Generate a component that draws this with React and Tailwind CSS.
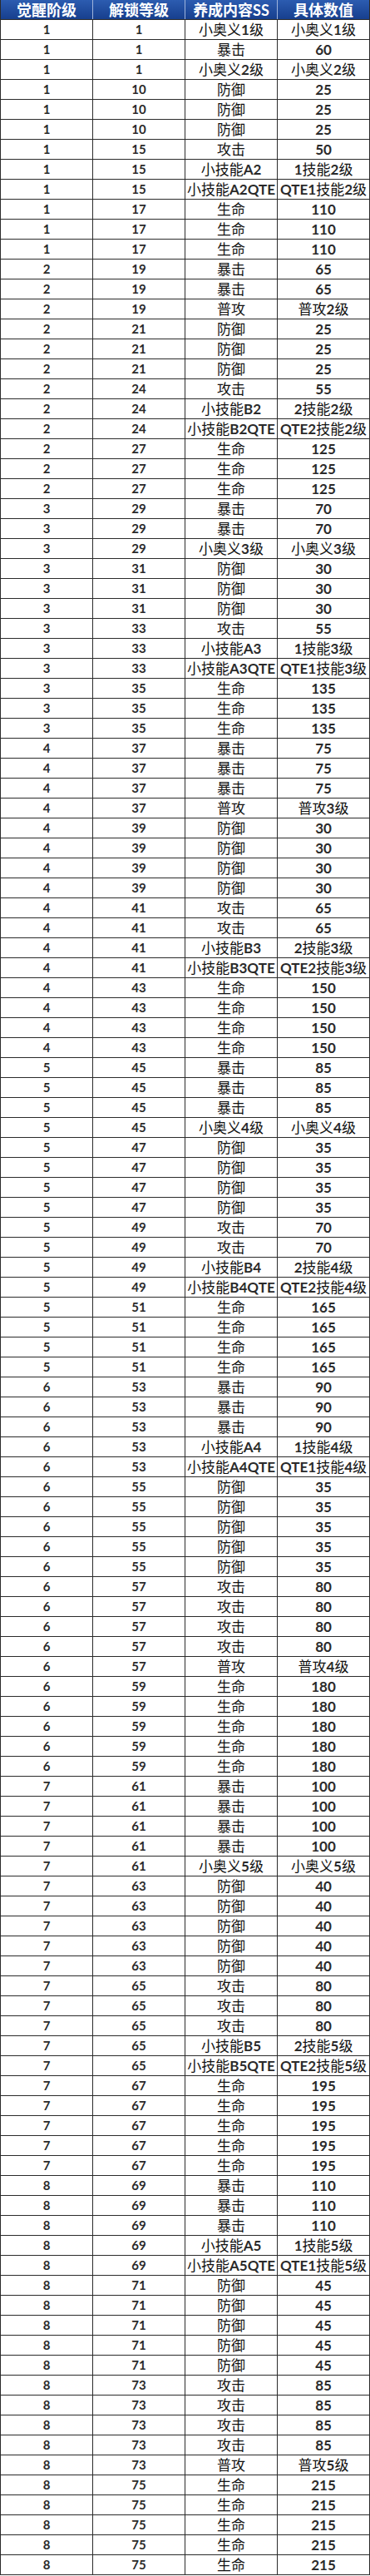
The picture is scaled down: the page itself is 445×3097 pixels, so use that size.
import React from "react";

// [觉醒阶级, 解锁等级, 养成内容, 具体数值, 重复行数]
const groups = [
  [1, 1, "小奥义1级", "小奥义1级", 1],
  [1, 1, "暴击", "60", 1],
  [1, 1, "小奥义2级", "小奥义2级", 1],
  [1, 10, "防御", "25", 3],
  [1, 15, "攻击", "50", 1],
  [1, 15, "小技能A2", "1技能2级", 1],
  [1, 15, "小技能A2QTE", "QTE1技能2级", 1],
  [1, 17, "生命", "110", 3],
  [2, 19, "暴击", "65", 2],
  [2, 19, "普攻", "普攻2级", 1],
  [2, 21, "防御", "25", 3],
  [2, 24, "攻击", "55", 1],
  [2, 24, "小技能B2", "2技能2级", 1],
  [2, 24, "小技能B2QTE", "QTE2技能2级", 1],
  [2, 27, "生命", "125", 3],
  [3, 29, "暴击", "70", 2],
  [3, 29, "小奥义3级", "小奥义3级", 1],
  [3, 31, "防御", "30", 3],
  [3, 33, "攻击", "55", 1],
  [3, 33, "小技能A3", "1技能3级", 1],
  [3, 33, "小技能A3QTE", "QTE1技能3级", 1],
  [3, 35, "生命", "135", 3],
  [4, 37, "暴击", "75", 3],
  [4, 37, "普攻", "普攻3级", 1],
  [4, 39, "防御", "30", 4],
  [4, 41, "攻击", "65", 2],
  [4, 41, "小技能B3", "2技能3级", 1],
  [4, 41, "小技能B3QTE", "QTE2技能3级", 1],
  [4, 43, "生命", "150", 4],
  [5, 45, "暴击", "85", 3],
  [5, 45, "小奥义4级", "小奥义4级", 1],
  [5, 47, "防御", "35", 4],
  [5, 49, "攻击", "70", 2],
  [5, 49, "小技能B4", "2技能4级", 1],
  [5, 49, "小技能B4QTE", "QTE2技能4级", 1],
  [5, 51, "生命", "165", 4],
  [6, 53, "暴击", "90", 3],
  [6, 53, "小技能A4", "1技能4级", 1],
  [6, 53, "小技能A4QTE", "QTE1技能4级", 1],
  [6, 55, "防御", "35", 5],
  [6, 57, "攻击", "80", 4],
  [6, 57, "普攻", "普攻4级", 1],
  [6, 59, "生命", "180", 5],
  [7, 61, "暴击", "100", 4],
  [7, 61, "小奥义5级", "小奥义5级", 1],
  [7, 63, "防御", "40", 5],
  [7, 65, "攻击", "80", 3],
  [7, 65, "小技能B5", "2技能5级", 1],
  [7, 65, "小技能B5QTE", "QTE2技能5级", 1],
  [7, 67, "生命", "195", 5],
  [8, 69, "暴击", "110", 3],
  [8, 69, "小技能A5", "1技能5级", 1],
  [8, 69, "小技能A5QTE", "QTE1技能5级", 1],
  [8, 71, "防御", "45", 5],
  [8, 73, "攻击", "85", 4],
  [8, 73, "普攻", "普攻5级", 1],
  [8, 75, "生命", "215", 5],
];

const rows = groups.flatMap(([stage, level, item, value, count]) =>
  Array.from({ length: count }, () => ({ stage, level, item, value }))
);

// latin letters and digits are bold in the sheet, the hanzi are not
const Mixed = ({ text }) =>
  String(text)
    .split(/([A-Za-z0-9]+)/)
    .filter(Boolean)
    .map((part, i) =>
      /[A-Za-z0-9]/.test(part) ? (
        <span key={i} className="font-bold text-[#2a2a2a]">
          {part}
        </span>
      ) : (
        <span key={i}>{part}</span>
      )
    );

const headers = ["觉醒阶级", "解锁等级", "养成内容SS", "具体数值"];

const cell =
  "flex items-center justify-center border-r border-[#2b2b2b] whitespace-nowrap";

export default function App() {
  return (
    <div className="w-[445px] bg-white font-['Lato','Noto_Sans_CJK_SC',sans-serif] text-[#111]">
      <div className="grid h-6 grid-cols-4 border-b border-l border-[#2b2b2b] bg-gradient-to-b from-[#2c5cb0] to-[#173f8e] text-[18px] font-bold text-white">
        {headers.map((h, i) => (
          <div
            key={h}
            className={`flex items-center justify-center leading-none ${
              i < 3 ? "border-r border-[#9fb4dc]" : "border-r border-[#2b2b2b]"
            }`}
          >
            {h}
          </div>
        ))}
      </div>
      {rows.map((row, idx) => (
        <div
          key={idx}
          className="grid h-6 grid-cols-4 border-b border-l border-[#2b2b2b] text-[16px] leading-none"
        >
          <div className={`${cell} text-[15px] font-bold text-[#2a2a2a]`}>{row.stage}</div>
          <div className={`${cell} text-[15px] font-bold text-[#2a2a2a]`}>{row.level}</div>
          <div className={`${cell} text-[17px]`}>
            <Mixed text={row.item} />
          </div>
          <div className={`${cell} text-[17px]`}>
            <Mixed text={row.value} />
          </div>
        </div>
      ))}
    </div>
  );
}
